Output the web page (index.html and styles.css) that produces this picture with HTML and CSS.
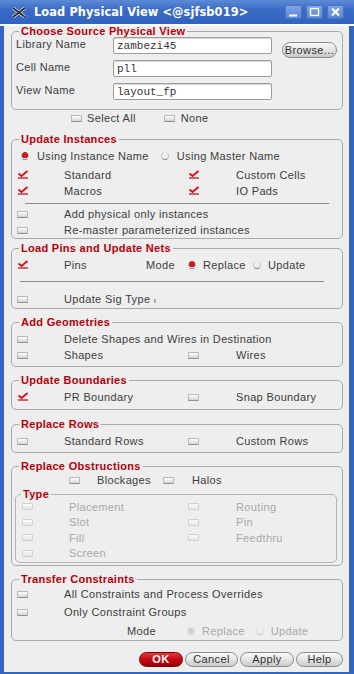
FILE: index.html
```html
<!DOCTYPE html>
<html lang="en">
<head>
  <meta charset="UTF-8">
  <title>Load Physical View</title>
  <link rel="stylesheet" href="styles.css">
</head>
<body>

  <div class="window">
    <!-- Title bar -->
    <div class="titlebar">
      <svg class="app-icon" width="14" height="11" viewBox="0 0 14 11">
        <path d="M1 1 L13 10 M13 1 L1 10" stroke="#d8dde6" stroke-width="3.2" fill="none"/>
        <path d="M1 1 L13 10 M13 1 L1 10" stroke="#26282c" stroke-width="1.6" fill="none"/>
      </svg>
      <span class="title">Load Physical View &lt;@sjfsb019&gt;</span>
      <div class="wm-buttons">
        <span class="wm-btn"><svg width="17" height="14"><path d="M4 10.5 H12" stroke="#fff" stroke-width="2"/></svg></span>
        <span class="wm-btn"><svg width="17" height="14"><rect x="4.5" y="3.5" width="8" height="7" stroke="#fff" stroke-width="1.4" fill="none"/></svg></span>
        <span class="wm-btn"><svg width="17" height="14"><path d="M5 3.5 L12 10.5 M12 3.5 L5 10.5" stroke="#fff" stroke-width="2"/></svg></span>
      </div>
    </div>

    <div class="client">

      <!-- Choose Source Physical View -->
      <fieldset class="grp grp-source">
        <legend>Choose Source Physical View</legend>
        <div class="source-grid">
          <label class="field-label">Library Name</label>
          <input class="text-in" type="text" value="zambezi45">
          <button class="pill browse" type="button">Browse...</button>
          <label class="field-label">Cell Name</label>
          <input class="text-in" type="text" value="pll">
          <span></span>
          <label class="field-label">View Name</label>
          <input class="text-in" type="text" value="layout_fp">
          <span></span>
        </div>
      </fieldset>

      <div class="selrow">
        <span class="cb"></span><span class="sel-all">Select All</span>
        <span class="cb cb-none"></span><span class="sel-none">None</span>
      </div>

      <!-- Update Instances -->
      <fieldset class="grp grp-inst">
        <legend>Update Instances</legend>
        <div class="radio-row">
          <span class="rb on"></span><span class="rb-text">Using Instance Name</span>
          <span class="rb rb-2"></span><span class="rb-text">Using Master Name</span>
        </div>
        <div class="row row-first">
          <span class="cb on"><svg width="12" height="10"><path d="M1.5 4.5 L4.5 7 L10.5 2" stroke="#d4101c" stroke-width="1.8" fill="none"/><path d="M1 9 H11" stroke="#a80c14" stroke-width="1.2"/></svg></span>
          <span>Standard</span>
          <span class="cb on"><svg width="12" height="10"><path d="M1.5 4.5 L4.5 7 L10.5 2" stroke="#d4101c" stroke-width="1.8" fill="none"/><path d="M1 9 H11" stroke="#a80c14" stroke-width="1.2"/></svg></span>
          <span>Custom Cells</span>
        </div>
        <div class="row">
          <span class="cb on"><svg width="12" height="10"><path d="M1.5 4.5 L4.5 7 L10.5 2" stroke="#d4101c" stroke-width="1.8" fill="none"/><path d="M1 9 H11" stroke="#a80c14" stroke-width="1.2"/></svg></span>
          <span>Macros</span>
          <span class="cb on"><svg width="12" height="10"><path d="M1.5 4.5 L4.5 7 L10.5 2" stroke="#d4101c" stroke-width="1.8" fill="none"/><path d="M1 9 H11" stroke="#a80c14" stroke-width="1.2"/></svg></span>
          <span>IO Pads</span>
        </div>
        <div class="sep sep-inst"></div>
        <div class="row">
          <span class="cb"></span>
          <span class="wide">Add physical only instances</span>
        </div>
        <div class="row">
          <span class="cb"></span>
          <span class="wide">Re-master parameterized instances</span>
        </div>
      </fieldset>

      <!-- Load Pins and Update Nets -->
      <fieldset class="grp grp-pins">
        <legend>Load Pins and Update Nets</legend>
        <div class="pins-row">
          <span class="cb on"><svg width="12" height="10"><path d="M1.5 4.5 L4.5 7 L10.5 2" stroke="#d4101c" stroke-width="1.8" fill="none"/><path d="M1 9 H11" stroke="#a80c14" stroke-width="1.2"/></svg></span>
          <span>Pins</span>
          <span>Mode</span>
          <span class="rb on"></span><span class="rb-text">Replace</span>
          <span class="rb rb-upd"></span><span class="rb-text">Update</span>
        </div>
        <div class="sep sep-pins"></div>
        <div class="row">
          <span class="cb"></span>
          <span class="wide">Update Sig Type <span class="tick">ı</span></span>
        </div>
      </fieldset>

      <!-- Add Geometries -->
      <fieldset class="grp">
        <legend>Add Geometries</legend>
        <div class="row">
          <span class="cb"></span>
          <span class="wide">Delete Shapes and Wires in Destination</span>
        </div>
        <div class="row">
          <span class="cb"></span>
          <span>Shapes</span>
          <span class="cb"></span>
          <span>Wires</span>
        </div>
      </fieldset>

      <!-- Update Boundaries -->
      <fieldset class="grp grp-single">
        <legend>Update Boundaries</legend>
        <div class="row">
          <span class="cb on"><svg width="12" height="10"><path d="M1.5 4.5 L4.5 7 L10.5 2" stroke="#d4101c" stroke-width="1.8" fill="none"/><path d="M1 9 H11" stroke="#a80c14" stroke-width="1.2"/></svg></span>
          <span>PR Boundary</span>
          <span class="cb"></span>
          <span>Snap Boundary</span>
        </div>
      </fieldset>

      <!-- Replace Rows -->
      <fieldset class="grp grp-rows">
        <legend>Replace Rows</legend>
        <div class="row">
          <span class="cb"></span>
          <span>Standard Rows</span>
          <span class="cb"></span>
          <span>Custom Rows</span>
        </div>
      </fieldset>

      <!-- Replace Obstructions -->
      <fieldset class="grp grp-obs">
        <legend>Replace Obstructions</legend>
        <div class="blk-row">
          <span class="cb"></span><span class="blk-text">Blockages</span>
          <span class="cb cb-halo"></span><span class="halo-text">Halos</span>
        </div>
        <fieldset class="grp sub">
          <legend>Type</legend>
          <div class="row sub-row">
            <span class="cb dis"></span><span>Placement</span>
            <span class="cb dis"></span><span>Routing</span>
          </div>
          <div class="row sub-row">
            <span class="cb dis"></span><span>Slot</span>
            <span class="cb dis"></span><span>Pin</span>
          </div>
          <div class="row sub-row">
            <span class="cb dis"></span><span>Fill</span>
            <span class="cb dis"></span><span>Feedthru</span>
          </div>
          <div class="row sub-row">
            <span class="cb dis"></span><span>Screen</span>
          </div>
        </fieldset>
      </fieldset>

      <!-- Transfer Constraints -->
      <fieldset class="grp grp-tc">
        <legend>Transfer Constraints</legend>
        <div class="row">
          <span class="cb"></span>
          <span class="wide">All Constraints and Process Overrides</span>
        </div>
        <div class="row row-gap">
          <span class="cb"></span>
          <span class="wide">Only Constraint Groups</span>
        </div>
        <div class="mode-row">
          <span class="mode-label">Mode</span>
          <span class="rb on dis"></span><span class="rb-text dis-text">Replace</span>
          <span class="rb rb-upd2 dis"></span><span class="rb-text dis-text">Update</span>
        </div>
      </fieldset>

      <!-- Dialog buttons -->
      <div class="actions">
        <button class="pill ok" type="button">OK</button>
        <button class="pill cancel" type="button">Cancel</button>
        <button class="pill apply" type="button">Apply</button>
        <button class="pill help" type="button">Help</button>
      </div>
    </div>
  </div>

</body>
</html>
```

FILE: styles.css
```css
body {
  margin: 0;
  font-family: "Liberation Sans", Arial, sans-serif;
  font-size: 11px;
  letter-spacing: 0.35px;
  color: #3c3c3c;
  background-color: #fff;
}

.window {
  width: 354px;
  height: 674px;
  overflow: hidden;
}

/* title bar */
.titlebar {
  height: 24px;
  display: flex;
  align-items: center;
  background: linear-gradient(#5c8ad6, #3a6cc6 40%, #3264bf);
  color: #fff;
}

.app-icon {
  margin-left: 12px;
}

.title {
  margin-left: 8px;
  font-family: "DejaVu Sans", sans-serif;
  font-weight: bold;
  font-size: 11.4px;
  letter-spacing: 0.1px;
}

.wm-buttons {
  margin-left: auto;
  margin-right: 10px;
  display: flex;
  gap: 4px;
}

.wm-btn {
  width: 17px;
  height: 14px;
  border-radius: 2px;
  background: linear-gradient(#7da4e4, #5a86d3);
  border: 1px solid #4a75c2;
  box-sizing: border-box;
  display: flex;
}

.wm-btn svg {
  margin: -1px;
}

.client {
  height: 650px;
  box-sizing: border-box;
  background-color: #eeeeee;
  border-left: 4px solid #3366c2;
  border-right: 5px solid #3366c2;
  border-bottom: 4px solid #3366c2;
}

/* groups */
.grp {
  margin: 8px 6px 0 7px;
  padding: 4px 0 3px 5px;
  border: 1px solid #a9a9a9;
  border-radius: 5px;
  min-width: 0;
}

.grp legend {
  margin-left: 2px;
  padding: 0 2px;
  line-height: 10px;
  color: #b4000a;
  font-weight: bold;
  letter-spacing: 0.3px;
}

.grp-source {
  margin-top: 2px;
  padding: 0 0 4px 5px;
}

.source-grid {
  display: grid;
  grid-template-columns: 96px 159px 65px;
  grid-auto-rows: 23px;
}

.field-label {
  padding-top: 1px;
  line-height: 14px;
  margin-left: -1px;
}

.text-in {
  box-sizing: border-box;
  width: 100%;
  min-width: 0;
  height: 17px;
  margin: 1px 0 0 0;
  padding: 0 0 0 3px;
  border: 1px solid #9c9c9c;
  border-radius: 2px;
  box-shadow: inset 0 1px 1px #d8d8d8;
  background: #fff;
  font-family: "Liberation Mono", monospace;
  font-size: 11px;
  color: #333;
}

.pill {
  box-sizing: border-box;
  height: 16px;
  padding: 0;
  border: 1px solid #8a8a8a;
  border-radius: 8px;
  background: linear-gradient(#fbfbfb, #e2e2e2 55%, #c9c9c9);
  font-family: "Liberation Sans", Arial, sans-serif;
  font-size: 11px;
  letter-spacing: 0.4px;
  color: #333;
}

.browse {
  width: 55px;
  margin: 6px 0 0 10px;
}

/* check boxes and radios */
.cb {
  display: block;
  box-sizing: border-box;
  width: 11px;
  height: 7px;
  border: 1px solid #b8b8b8;
  border-bottom-color: #8f8f8f;
  border-radius: 1px;
  background: linear-gradient(#ffffff, #d4d4d4);
}

.cb.on {
  width: 12px;
  height: 10px;
  border: none;
  background: none;
  margin-top: -2px;
}

.cb.on svg {
  display: block;
}

.cb.dis {
  border-color: #d0d0d0;
  background: linear-gradient(#fafafa, #e6e6e6);
}

.rb {
  display: inline-block;
  box-sizing: border-box;
  width: 8px;
  height: 8px;
  border-radius: 50%;
  border-bottom: 1.5px solid #8a8a8a;
  border-left: 1px solid #c4c4c4;
  border-right: 1px solid #c4c4c4;
}

.rb.on {
  background: radial-gradient(circle at 50% 45%, #e0141c 0 2.4px, #a30a10 2.6px 3px, transparent 3.2px);
}

.rb.dis {
  border-bottom-color: #c8c8c8;
  border-left-color: #dedede;
  border-right-color: #dedede;
}

.rb.on.dis {
  background: radial-gradient(circle, #cfcfcf 0 2.5px, transparent 3px);
}

.dis-text {
  color: #a8a8a8;
}

/* option rows */
.selrow {
  display: flex;
  align-items: center;
  height: 16px;
  padding-left: 67px;
}

.sel-all {
  margin-left: 5px;
}

.cb-none {
  margin-left: 28px;
}

.sel-none {
  margin-left: 6px;
}

.row {
  display: grid;
  grid-template-columns: 47px 124px 48px 1fr;
  align-items: center;
  height: 16px;
}

.row .wide {
  grid-column: 2 / 5;
  white-space: nowrap;
}

.radio-row {
  display: flex;
  align-items: center;
  height: 16px;
  padding-left: 4px;
}

.rb-text {
  margin-left: 8px;
}

.rb-2 {
  margin-left: 12px;
}

.row-first {
  margin-top: 3px;
}

.sep {
  height: 0;
  width: 304px;
  border-top: 1px solid #8c8c8c;
}

.grp-inst {
  padding-bottom: 0;
}

.sep-inst {
  margin: 4px 0 2px 8px;
}

.pins-row {
  display: grid;
  grid-template-columns: 47px 82px 42px 8px 57px 8px auto;
  align-items: center;
  height: 16px;
}

.pins-row .rb-text {
  margin-left: 7px;
}

.rb-upd {
  margin-left: 0;
}

.grp-pins {
  margin-top: 4px;
  padding-bottom: 1px;
}

.sep-pins {
  margin: 8px 0 9px 3px;
}

.tick {
  font-size: 8px;
}

.grp-single {
  padding-bottom: 4px;
}

.grp-rows {
  margin-top: 9px;
}

.grp-obs {
  padding: 1px 0 2px 5px;
}

.blk-row {
  display: flex;
  align-items: center;
  height: 16px;
}

.blk-row .cb {
  margin-left: 52px;
}

.blk-text {
  margin-left: 17px;
}

.blk-row .cb-halo {
  margin-left: 12px;
}

.halo-text {
  margin-left: 18px;
}

.sub {
  margin: 1px 5px 0 -2px;
  padding: 0 0 1px 6px;
  border-color: #b4b4b4;
}

.sub legend {
  margin-left: -1px;
}

.sub-row {
  grid-template-columns: 47px 119px 48px 1fr;
  height: 15.5px;
  color: #a8a8a8;
}

.grp-tc {
  padding: 2px 0 1px 5px;
}

.row-gap {
  margin-top: 2px;
}

.mode-row {
  display: flex;
  align-items: center;
  height: 16px;
  margin-top: 3px;
  padding-left: 110px;
}

.mode-row .rb.on {
  margin-left: 31px;
}

.mode-row .rb-text {
  margin-left: 7px;
}

.rb-upd2 {
  margin-left: 11px;
}

/* dialog buttons */
.actions {
  display: flex;
  justify-content: flex-end;
  gap: 2px;
  margin-top: 11px;
  padding-right: 6px;
}

.actions .pill {
  height: 15px;
  line-height: 13px;
}

.ok {
  width: 44px;
  border-color: #7c0000;
  background: linear-gradient(#e8383a, #c20a10 50%, #950006);
  color: #fff;
  font-weight: bold;
}

.cancel {
  width: 53px;
}

.apply {
  width: 54px;
}

.help {
  width: 47px;
}
```
